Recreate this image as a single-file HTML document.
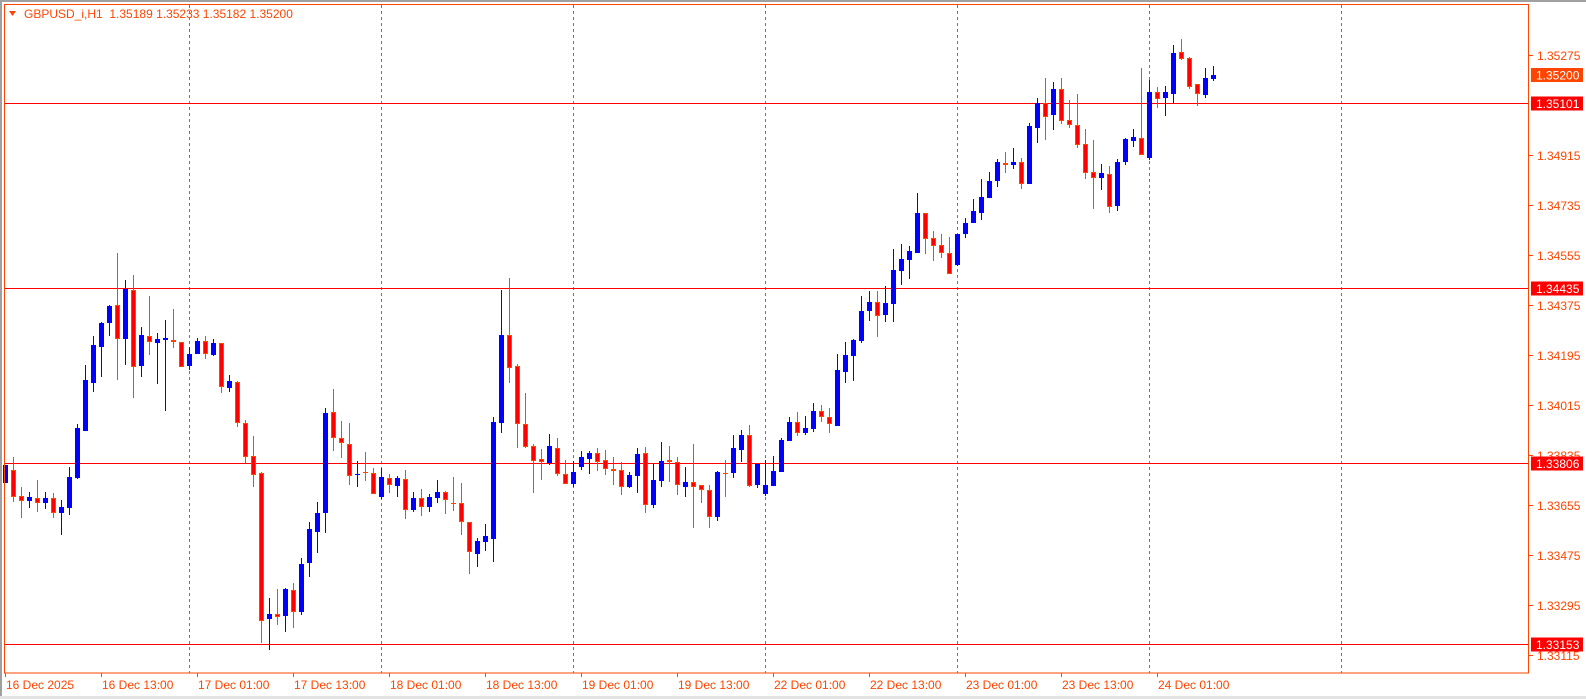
<!DOCTYPE html>
<html><head><meta charset="utf-8"><style>
html,body{margin:0;padding:0;background:#fff;width:1586px;height:699px;overflow:hidden}
svg{display:block}
text{font-family:"Liberation Sans",sans-serif;font-size:12px;white-space:pre}
</style></head><body>
<svg id="c" width="1586" height="699" xmlns="http://www.w3.org/2000/svg">
<rect x="0" y="0" width="1586" height="699" fill="#fff"/>
<rect x="0" y="0" width="1586" height="2" fill="#a0a0a0"/>
<rect x="0" y="0" width="2" height="699" fill="#a0a0a0"/>
<rect x="0" y="696" width="1586" height="3" fill="#e3e3e3"/>
<g id="grid" stroke="#ff4500" stroke-width="1" stroke-dasharray="3,3"></g>
<g stroke="#ff0000" stroke-width="1">
<line x1="4" y1="103.5" x2="1529" y2="103.5"/>
<line x1="4" y1="288.5" x2="1529" y2="288.5"/>
<line x1="4" y1="463.5" x2="1529" y2="463.5"/>
<line x1="4" y1="644.5" x2="1529" y2="644.5"/>
</g>
<g id="candles"></g>
<rect x="4.5" y="4.5" width="1524" height="668.5" fill="none" stroke="#ff4500" stroke-width="1"/>
<polygon points="9,11 16,11 12.5,16" fill="#ff4500"/>
<text x="24" y="18" fill="#ff4500" xml:space="preserve">GBPUSD_i,H1  1.35189 1.35233 1.35182 1.35200</text>
<g id="axis" fill="#ff4500"></g>
</svg>
<script>
var NS="http://www.w3.org/2000/svg";
function el(p,t,a,txt){var e=document.createElementNS(NS,t);for(var k in a)e.setAttribute(k,a[k]);if(txt)e.textContent=txt;p.appendChild(e);return e;}
var g=document.getElementById('grid');
[189,381,573,765,957,1149,1341].forEach(function(x){el(g,'line',{x1:x+0.5,y1:5,x2:x+0.5,y2:673});});
var D=[
[1,465,465,483,483],[0,457,470,497,502],[0,487,496,501,518],[1,492,497,501,508],[0,480,498,503,512],
[1,492,498,503,509],[0,493,498,513,518],[1,500,507,513,535],[1,467,477,508,515],[1,424,428,478,479],
[1,365,380,431,431],[1,336,345,383,392],[1,322,323,347,377],[1,305,306,323,336],[0,253,305,339,380],
[1,280,289,339,365],[0,275,290,367,398],[1,327,335,366,377],[0,296,336,342,355],[1,333,339,343,384],
[1,320,338,340,411],[0,309,340,342,348],[0,342,342,367,367],[1,347,354,366,370],[1,338,341,354,354],
[0,336,341,354,359],[1,339,343,355,356],[0,343,343,387,393],[1,375,381,388,392],[0,381,382,423,427],
[0,420,423,457,463],[0,436,456,475,487],[0,472,473,621,643],[1,598,614,619,650],[0,589,614,617,625],
[1,588,589,616,632],[0,583,590,612,628],[1,558,564,612,615],[1,522,529,563,577],[1,502,513,532,553],
[1,408,413,513,533],[0,389,412,438,451],[0,421,438,443,458],[0,423,444,476,485],[1,461,474,475,487],
[0,452,472,473,481],[0,468,473,494,494],[1,468,477,497,499],[0,474,478,485,493],[1,476,478,486,497],
[0,470,479,510,519],[1,492,498,510,512],[0,489,498,507,516],[1,494,497,507,512],[1,480,492,498,503],
[0,491,492,500,514],[0,477,503,503,511],[0,483,503,522,535],[0,522,522,552,574],[1,538,541,554,567],
[1,524,536,542,551],[1,417,422,539,562],[1,290,335,423,433],[0,278,335,368,383],[0,364,366,424,448],
[0,393,424,447,448],[0,444,446,461,493],[0,449,459,462,480],[1,434,446,463,465],[0,438,448,474,476],
[0,460,474,484,484],[1,461,472,484,487],[1,451,457,467,470],[1,451,453,459,474],[0,448,453,462,471],
[0,450,460,469,475],[0,457,469,471,485],[0,462,470,487,495],[1,472,475,487,488],[1,448,454,476,493],
[0,447,453,505,513],[1,464,480,505,508],[1,442,461,481,487],[0,446,460,462,482],[0,457,462,485,495],
[1,467,482,487,497],[0,444,482,487,528],[0,485,485,490,503],[0,485,490,517,528],[1,471,472,517,521],
[0,460,473,473,497],[1,435,448,473,478],[1,430,435,450,462],[0,425,435,486,487],[1,464,464,485,488],
[1,460,485,494,496],[1,456,471,486,486],[1,438,440,472,472],[1,417,422,441,441],[0,412,422,433,436],
[1,416,428,433,435],[1,403,411,429,432],[0,405,411,417,422],[0,408,417,424,433],[1,354,370,426,426],
[1,342,355,372,383],[1,339,340,356,381],[1,296,311,341,343],[1,291,302,311,321],[0,291,302,316,337],
[1,286,303,315,322],[1,249,270,304,322],[1,244,259,271,285],[1,246,251,260,279],[1,193,213,253,253],
[0,213,213,239,254],[0,231,238,246,261],[0,234,245,253,258],[0,237,253,274,274],[1,234,234,265,266],
[1,218,223,234,238],[1,199,211,223,223],[1,179,197,213,220],[1,172,181,198,198],[1,159,162,181,187],
[0,152,163,165,173],[1,148,162,165,169],[0,158,162,184,189],[1,123,126,184,184],[1,98,103,128,143],
[0,78,103,117,140],[1,82,89,115,130],[0,78,89,121,124],[0,100,120,125,128],[0,94,125,145,148],
[0,129,144,173,179],[0,140,172,178,209],[1,164,173,178,190],[0,166,174,207,213],[1,159,162,206,211],
[1,138,139,162,165],[1,129,137,141,147],[0,68,138,155,155],[1,80,92,158,160],[0,87,92,99,108],
[1,86,92,98,116],[1,45,53,94,103],[0,39,52,59,60],[0,57,58,87,89],[0,84,84,94,106],
[1,68,78,95,98],[1,66,75,79,81]
];
var cg=document.getElementById('candles');
D.forEach(function(d,k){
 var x=5+8*k, bull=d[0]==1, wc=bull?'#0000ff':'#ff4500';
 el(cg,'rect',{x:x,y:d[1],width:1,height:Math.max(1,d[4]-d[1]),fill:wc});
 var h=d[3]-d[2];
 if(h<2){el(cg,'rect',{x:x-2,y:d[2],width:5,height:Math.max(1,h),fill:wc});}
 else if(bull){el(cg,'rect',{x:x-2,y:d[2],width:5,height:h,fill:'#0000ff'});}
 else{el(cg,'rect',{x:x-1.5,y:d[2]+0.5,width:4,height:h-1,fill:'#ff0000',stroke:'#ff4500','stroke-width':1});}
});
var ax=document.getElementById('axis');
[["1.35275",55],["1.34915",155],["1.34735",205],["1.34555",255],["1.34375",305],["1.34195",355],["1.34015",405],["1.33835",455],["1.33655",505],["1.33475",555],["1.33295",605],["1.33115",655]].forEach(function(p){
 el(ax,'rect',{x:1529,y:p[1],width:4,height:1});
 el(ax,'text',{x:1537,y:p[1]+5},p[0]);
});
[["1.35200",75,"#ff4500"],["1.35101",103.5,"#ff0000"],["1.34435",288.5,"#ff0000"],["1.33806",463.5,"#ff0000"],["1.33153",644.5,"#ff0000"]].forEach(function(p){
 el(ax,'rect',{x:1531,y:p[1]-7,width:52,height:14,fill:p[2]});
 el(ax,'text',{x:1536,y:p[1]+4.5,fill:'#fff'},p[0]);
});
var T=["16 Dec 2025","16 Dec 13:00","17 Dec 01:00","17 Dec 13:00","18 Dec 01:00","18 Dec 13:00","19 Dec 01:00","19 Dec 13:00","22 Dec 01:00","22 Dec 13:00","23 Dec 01:00","23 Dec 13:00","24 Dec 01:00"];
T.forEach(function(t,i){var x=5+96*i;
 el(ax,'rect',{x:x,y:673,width:1,height:4});
 el(ax,'text',{x:x+1,y:689},t);
});
</script>
</body></html>
